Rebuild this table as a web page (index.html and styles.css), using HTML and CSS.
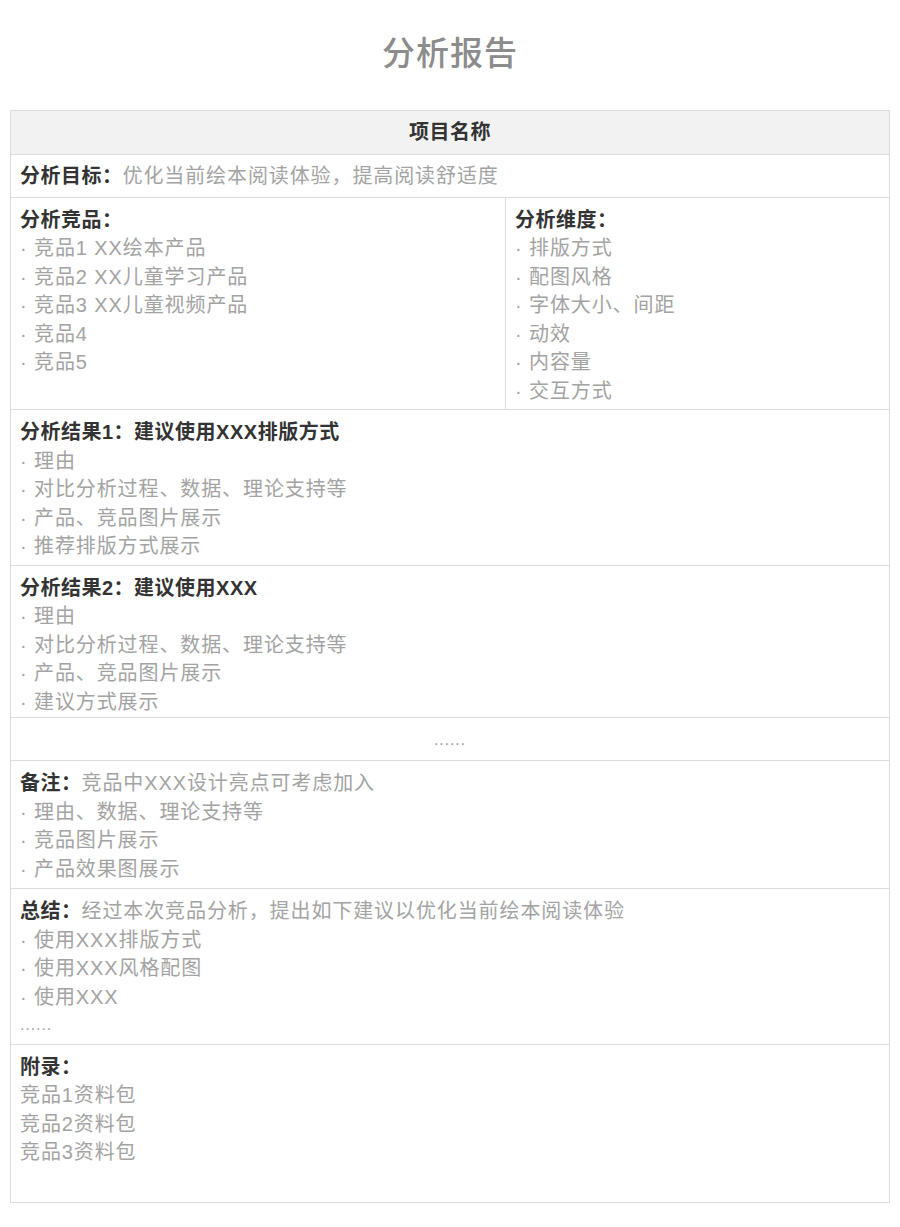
FILE: index.html
```html
<!DOCTYPE html>
<html lang="zh-CN">
<head>
  <meta charset="UTF-8">
  <title>分析报告</title>
  <meta name="viewport" content="width=device-width, initial-scale=1.0">
  <link rel="stylesheet" href="styles.css">
</head>
<body>
  <h1 class="title">分析报告</h1>
  <div class="report">
    <div class="row head">项目名称</div>
    <div class="row single">
      <span class="label">分析目标：</span>优化当前绘本阅读体验，提高阅读舒适度
    </div>
    <div class="row split">
      <div class="col">
        <div class="label">分析竞品：</div>
        <div>· 竞品1 XX绘本产品</div>
        <div>· 竞品2 XX儿童学习产品</div>
        <div>· 竞品3 XX儿童视频产品</div>
        <div>· 竞品4</div>
        <div>· 竞品5</div>
      </div>
      <div class="col">
        <div class="label">分析维度：</div>
        <div>· 排版方式</div>
        <div>· 配图风格</div>
        <div>· 字体大小、间距</div>
        <div>· 动效</div>
        <div>· 内容量</div>
        <div>· 交互方式</div>
      </div>
    </div>
    <div class="row">
      <div class="label">分析结果1：建议使用XXX排版方式</div>
      <div>· 理由</div>
      <div>· 对比分析过程、数据、理论支持等</div>
      <div>· 产品、竞品图片展示</div>
      <div>· 推荐排版方式展示</div>
    </div>
    <div class="row tight">
      <div class="label">分析结果2：建议使用XXX</div>
      <div>· 理由</div>
      <div>· 对比分析过程、数据、理论支持等</div>
      <div>· 产品、竞品图片展示</div>
      <div>· 建议方式展示</div>
    </div>
    <div class="row more">......</div>
    <div class="row note">
      <div><span class="label">备注：</span>竞品中XXX设计亮点可考虑加入</div>
      <div>· 理由、数据、理论支持等</div>
      <div>· 竞品图片展示</div>
      <div>· 产品效果图展示</div>
    </div>
    <div class="row">
      <div><span class="label">总结：</span>经过本次竞品分析，提出如下建议以优化当前绘本阅读体验</div>
      <div>· 使用XXX排版方式</div>
      <div>· 使用XXX风格配图</div>
      <div>· 使用XXX</div>
      <div class="dots">......</div>
    </div>
    <div class="row last">
      <div class="label">附录：</div>
      <div>竞品1资料包</div>
      <div>竞品2资料包</div>
      <div>竞品3资料包</div>
    </div>
  </div>
</body>
</html>
```

FILE: styles.css
```css
body {
  margin: 0;
  background: #fff;
  font-family: "Liberation Sans", "Noto Sans CJK SC", sans-serif;
  color: #a3a3a3;
}
.title {
  margin: 0;
  padding-top: 32px;
  height: 78px;
  line-height: 44px;
  text-align: center;
  font-size: 33px;
  font-weight: 500;
  letter-spacing: 1px;
  color: #8c8c8c;
}
.report {
  margin: 0 10px 0 10px;
  border: 1px solid #dcdcdc;
  font-size: 20px;
  line-height: 28.5px;
  letter-spacing: 0.9px;
}
.row {
  padding: 8px 9px 4px 9px;
  border-top: 1px solid #dcdcdc;
}
.row.head {
  border-top: none;
  height: 43px;
  padding: 0;
  line-height: 43px;
  text-align: center;
  background: #f2f2f2;
  color: #333;
  font-weight: bold;
  letter-spacing: 0.5px;
}
.label {
  color: #333;
  font-weight: bold;
  letter-spacing: 0.5px;
}
.row.single {
  padding-top: 7px;
  padding-bottom: 6px;
}
.row.split {
  display: flex;
  padding: 0;
}
.split .col {
  padding: 8px 9px 4px 9px;
}
.split .col:first-child {
  width: 476px;
  border-right: 1px solid #dcdcdc;
}
.row.tight {
  padding-bottom: 1px;
}
.row.more {
  text-align: center;
  font-size: 16px;
  color: #999;
  height: 28.5px;
  line-height: 28.5px;
  padding-bottom: 5.5px;
}
.row.note {
  padding-bottom: 5px;
}
.dots {
  font-size: 16px;
}
.row.last {
  padding-bottom: 35px;
}
```
